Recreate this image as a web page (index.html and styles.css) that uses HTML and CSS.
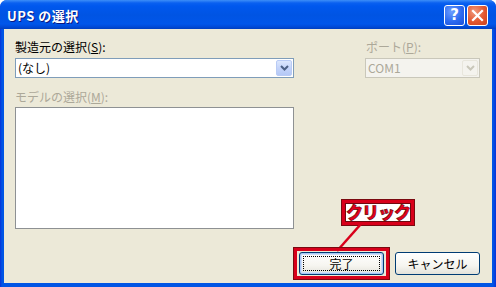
FILE: index.html
```html
<!DOCTYPE html>
<html lang="ja">
<head>
<meta charset="utf-8">
<title>UPS の選択</title>
<link rel="stylesheet" href="styles.css">
</head>
<body>
<div class="window">
  <div class="titlebar">
    <span class="title">UPS の選択</span>
    <div class="caption-btns">
      <span class="cap help">?</span>
      <span class="cap close"><svg width="13" height="13" viewBox="0 0 13 13"><path d="M2 2 L11 11 M11 2 L2 11" stroke="#fff" stroke-width="2.2" stroke-linecap="square"/></svg></span>
    </div>
  </div>
  <div class="client">
    <div class="top">
      <div class="col-left">
        <div class="label">製造元の選択(<u>S</u>):</div>
        <div class="combo">
          <span class="combo-text">(なし)</span>
          <span class="arrow"><svg width="9" height="6" viewBox="0 0 9 6"><path d="M1 1 L4.5 4.5 L8 1" fill="none" stroke="#4D6185" stroke-width="2"/></svg></span>
        </div>
        <div class="label disabled model">モデルの選択(<u>M</u>):</div>
        <div class="listbox"></div>
      </div>
      <div class="col-right">
        <div class="label disabled">ポート(<u>P</u>):</div>
        <div class="combo combo-disabled">
          <span class="combo-text">COM1</span>
          <span class="arrow"><svg width="9" height="6" viewBox="0 0 9 6"><path d="M1 1 L4.5 4.5 L8 1" fill="none" stroke="#C9C7BA" stroke-width="2"/></svg></span>
        </div>
      </div>
    </div>
    <div class="buttons">
      <button class="btn default"><span class="focus">完了</span></button>
      <button class="btn">キャンセル</button>
    </div>
    <div class="callout">クリック</div>
    <svg class="pointer" width="30" height="30" viewBox="0 0 30 30"><path d="M27 0 L3 27" stroke="#D8001A" stroke-width="2.5"/></svg>
    <div class="highlight"></div>
  </div>
</div>
</body>
</html>
```

FILE: styles.css
```css
* { box-sizing: border-box; }
html, body {
  margin: 0;
  padding: 0;
  background: #ffffff;
}
body {
  width: 496px;
  height: 287px;
  overflow: hidden;
  font-family: "Noto Sans CJK JP", "Noto Sans", sans-serif;
  font-size: 12px;
}
.window {
  width: 496px;
  height: 287px;
  display: flex;
  flex-direction: column;
  background: linear-gradient(to right, #0831D9 0px, #0055E5 2px, #0055E5 493px, #0831D9 496px);
  border-radius: 7px 7px 0 0;
  overflow: hidden;
}
.titlebar {
  height: 29px;
  flex: none;
  display: flex;
  align-items: center;
  justify-content: space-between;
  padding: 0 8px 0 7px;
  background: linear-gradient(to bottom, #3D8EF8 0px, #0A60F0 3px, #0058EE 6px, #0054E3 15px, #0056EA 24px, #0049D6 27px, #003FBF 29px);
}
.title {
  color: #ffffff;
  font-weight: bold;
  font-size: 13px;
  letter-spacing: 0.5px;
  text-shadow: 1px 1px 0 #0A1883;
  padding-top: 1px;
}
.caption-btns {
  display: flex;
  gap: 2px;
  padding-top: 1px;
}
.cap {
  width: 21px;
  height: 21px;
  border: 1px solid #ffffff;
  border-radius: 3px;
  display: flex;
  align-items: center;
  justify-content: center;
}
.help {
  background: radial-gradient(circle at 35% 30%, #6D9EFF 0%, #2C6AF0 55%, #1A4FD8 100%);
  color: #ffffff;
  font-family: "DejaVu Sans", sans-serif;
  font-weight: bold;
  font-size: 15px;
  line-height: 1;
}
.close {
  background: radial-gradient(circle at 35% 30%, #F09A7E 0%, #E2572F 55%, #C94220 100%);
}
.client {
  position: relative;
  flex: 1;
  margin: 0 4px 4px 4px;
  background: #ECE9D8;
  display: flex;
  flex-direction: column;
  padding: 11px 12px 8px 11px;
}
.top {
  display: flex;
  gap: 70px;
}
.col-left {
  width: 279px;
  display: flex;
  flex-direction: column;
}
.col-right {
  width: 116px;
  display: flex;
  flex-direction: column;
  padding-left: 1px;
}
.label {
  height: 14px;
  line-height: 14px;
  margin-bottom: 4px;
  color: #000000;
  white-space: nowrap;
}
.label u { text-decoration-thickness: 1px; text-underline-offset: 1px; }
.disabled { color: #ACA899; }
.col-right .label { padding-left: 1px; }
.model {
  margin-top: 12px;
  margin-bottom: 3px;
}
.combo {
  height: 20px;
  border: 1px solid #7F9DB9;
  background: #ffffff;
  display: flex;
  align-items: center;
  justify-content: space-between;
  padding: 0 1px 0 2px;
}
.combo-text {
  line-height: 16px;
}
.combo-disabled {
  border-color: #C9C7BA;
  background: #F4F3EE;
  color: #ACA899;
}
.arrow {
  width: 16px;
  height: 16px;
  border: 1px solid #B9CBF5;
  border-radius: 2px;
  background: linear-gradient(to bottom, #DCE7FD 0%, #C4D4FA 50%, #B4C8F6 100%);
  display: flex;
  align-items: center;
  justify-content: center;
}
.combo-disabled .arrow {
  border-color: #E8E6DC;
  background: #F4F3EE;
}
.listbox {
  height: 122px;
  border: 1px solid #8E9193;
  background: #ffffff;
}
.buttons {
  margin-top: auto;
  display: flex;
  justify-content: flex-end;
  gap: 11px;
}
.btn {
  width: 85px;
  height: 23px;
  border: 1px solid #003C74;
  border-radius: 3px;
  background: linear-gradient(to bottom, #FFFFFF 0%, #F6F5F0 60%, #E3E2DA 100%);
  font-family: "Noto Sans CJK JP", "Noto Sans", sans-serif;
  font-size: 12px;
  color: #000000;
  padding: 0;
  display: flex;
  align-items: center;
  justify-content: center;
}
.btn.default {
  box-shadow: inset 0 0 0 1px #A9C7F5, inset 0 0 0 2px #CEDDF8;
  padding: 3px;
}
.focus {
  width: 100%;
  height: 100%;
  border: 1px dotted #000000;
  display: flex;
  align-items: center;
  justify-content: center;
  line-height: 1;
}
.callout {
  position: absolute;
  left: 338px;
  top: 171px;
  width: 72px;
  height: 25px;
  border: 3px solid #D8001A;
  box-shadow: inset 0 0 0 1px #6E0A10, 0 0 0 1px #7A0A10;
  background: #FFFFFF;
  color: #E5001C;
  font-weight: 900;
  font-size: 17px;
  line-height: 18px;
  text-align: center;
  letter-spacing: -1px;
  -webkit-text-stroke: 0.6px #5A0000;
}
.pointer {
  position: absolute;
  left: 330px;
  top: 195px;
}
.highlight {
  position: absolute;
  left: 290px;
  top: 219px;
  width: 95px;
  height: 31px;
  border: 3px solid #D8001A;
  box-shadow: 0 0 0 1px #7A0A10;
}
```
